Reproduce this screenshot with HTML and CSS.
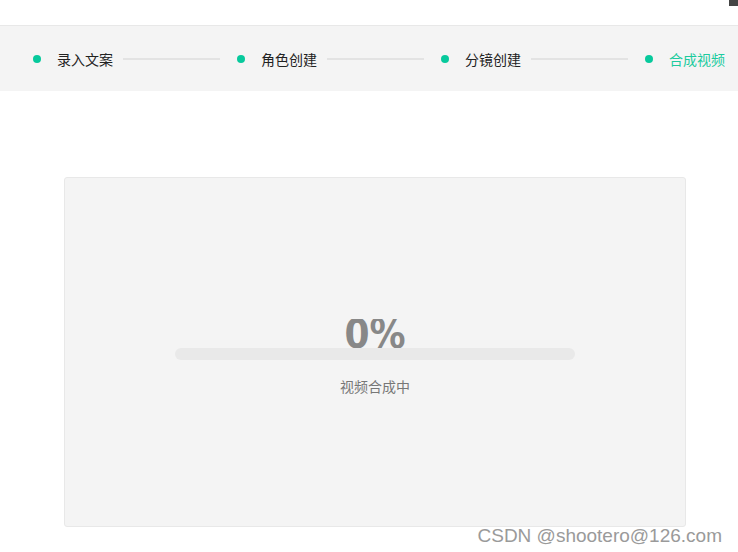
FILE: index.html
```html
<!DOCTYPE html>
<html lang="zh-CN">
<head>
  <meta charset="UTF-8" />
  <meta name="viewport" content="width=device-width, initial-scale=1.0" />
  <title>合成视频</title>
  <link rel="stylesheet" href="styles.css">
</head>
<body>
  <div class="topbar">
    <span class="close-corner"></span>
  </div>

  <div class="steps">
    <div class="step">
      <span class="dot"></span>
      <span class="step-name">录入文案</span>
      <span class="step-line"></span>
    </div>
    <div class="step">
      <span class="dot"></span>
      <span class="step-name">角色创建</span>
      <span class="step-line"></span>
    </div>
    <div class="step">
      <span class="dot"></span>
      <span class="step-name">分镜创建</span>
      <span class="step-line"></span>
    </div>
    <div class="step active">
      <span class="dot"></span>
      <span class="step-name">合成视频</span>
    </div>
  </div>

  <div class="panel">
    <div class="progress">
      <div class="percent">0%</div>
      <div class="bar"><div class="bar-fill" style="width: 0%"></div></div>
      <div class="status">视频合成中</div>
    </div>
  </div>

  <div class="watermark">CSDN @shootero@126.com</div>
</body>
</html>
```

FILE: styles.css
```css
body {
  margin: 0;
  font-family: "Noto Sans CJK SC", "Liberation Sans", sans-serif;
  font-size: 14px;
  color: #222;
  background-color: #fff;
  overflow: hidden;
}

.topbar {
  height: 25px;
  border-bottom: 1px solid #e8e8e8;
  display: flex;
  justify-content: flex-end;
}

.close-corner {
  width: 9px;
  height: 6px;
  background-color: #444;
}

.steps {
  height: 65px;
  background-color: #f4f4f4;
  display: flex;
  align-items: center;
  padding-left: 33px;
}

.step {
  display: flex;
  align-items: center;
  width: 204px;
  flex-shrink: 0;
}

.step.active {
  width: auto;
}

.dot {
  width: 8px;
  height: 8px;
  border-radius: 50%;
  background-color: #07c99c;
  flex-shrink: 0;
}

.step-name {
  margin-left: 16px;
  line-height: 20px;
  white-space: nowrap;
}

.step-line {
  margin: 0 17px 0 10px;
  flex: 1;
  height: 2px;
  background-color: #e3e3e3;
}

.step.active .step-name {
  color: #1ccb9e;
}

.panel {
  margin: 86px 0 0 64px;
  width: 620px;
  height: 348px;
  background-color: #f4f4f4;
  border: 1px solid #e8e8e8;
  border-radius: 3px;
}

.progress {
  padding-top: 141px;
  display: flex;
  flex-direction: column;
  align-items: center;
}

.percent {
  font-family: "DejaVu Sans Condensed", "DejaVu Sans", sans-serif;
  font-weight: bold;
  font-size: 40px;
  line-height: 30px;
  height: 29px;
  overflow: hidden;
  color: #888;
}

.bar {
  width: 400px;
  height: 12px;
  border-radius: 6px;
  background-color: #e9e9e9;
  overflow: hidden;
}

.bar-fill {
  height: 100%;
  background-color: #07c99c;
}

.status {
  margin-top: 16px;
  line-height: 20px;
  color: #777;
}

.watermark {
  position: absolute;
  right: 16px;
  top: 525px;
  font-family: "Liberation Sans", Arial, sans-serif;
  font-size: 19px;
  color: #9a9a9a;
  text-shadow: 0 0 2px #fff;
}
```
